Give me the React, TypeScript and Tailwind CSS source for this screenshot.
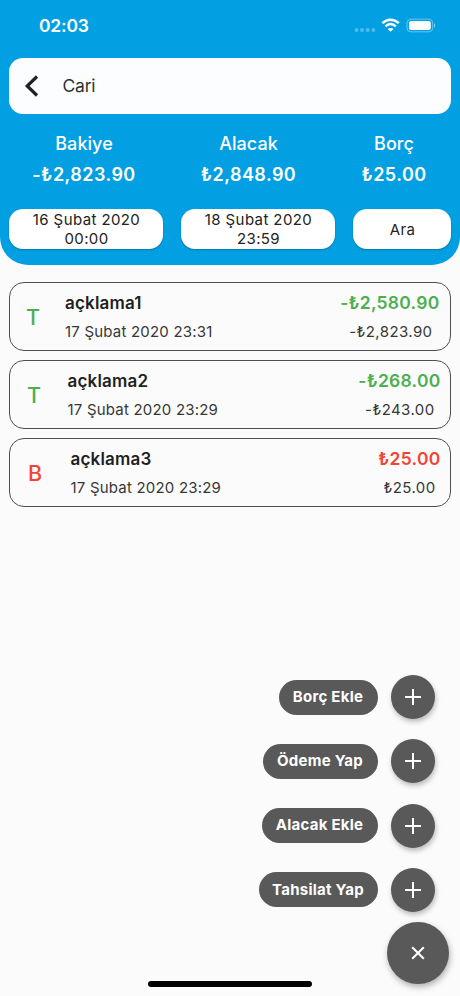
type Entry = {
  kind: string;
  title: string;
  date: string;
  amount: string;
  balance: string;
  color: string;
  kindBox: string;
  amountPad: string;
  balancePad: string;
};

const entries: Entry[] = [
  { kind: "T", title: "açklama1", date: "17 Şubat 2020 23:31", amount: "-₺2,580.90", balance: "-₺2,823.90", color: "text-[#4caf50]", kindBox: "w-[55px] pl-[16px]", amountPad: "pr-[10.5px]", balancePad: "pr-[17.5px]" },
  { kind: "T", title: "açklama2", date: "17 Şubat 2020 23:29", amount: "-₺268.00", balance: "-₺243.00", color: "text-[#4caf50]", kindBox: "w-[57.5px] pl-[17px]", amountPad: "pr-[9.5px]", balancePad: "pr-[15.5px]" },
  { kind: "B", title: "açklama3", date: "17 Şubat 2020 23:29", amount: "₺25.00", balance: "₺25.00", color: "text-[#f44336]", kindBox: "w-[60.5px] pl-[18px]", amountPad: "pr-[9.5px]", balancePad: "pr-[14.5px]" },
];

const actions = [
  { label: "Borç Ekle", width: "w-[99px]" },
  { label: "Ödeme Yap", width: "w-[115px]" },
  { label: "Alacak Ekle", width: "w-[116px]" },
  { label: "Tahsilat Yap", width: "w-[119px]" },
];

function StatusBar() {
  return (
    <div className="flex h-[58px] items-start pl-[39px] pr-[24px] pt-[14px]">
      <span className="text-[17.5px] font-semibold leading-[24px] tracking-[-0.2px]">02:03</span>
      <svg className="ml-auto mt-[3px]" width="82" height="16" viewBox="0 0 82 16" fill="none">
        <g fill="#fff" fillOpacity="0.3">
          <circle cx="2.5" cy="13" r="2" />
          <circle cx="8" cy="13" r="2" />
          <circle cx="13.7" cy="13" r="2" />
          <circle cx="19.4" cy="13" r="2" />
        </g>
        <g stroke="#fff" strokeWidth="2.5">
          <path d="M28.4 6.2C33.3 1.5 39.9 1.5 44.8 6.2" />
          <path d="M31.4 9.3C34.6 6.3 38.6 6.3 41.8 9.3" />
        </g>
        <path d="M36.6 14.8L33.7 12C35.3 10.5 37.9 10.5 39.5 12Z" fill="#fff" />
        <rect x="53" y="2.2" width="25.7" height="12.6" rx="3.8" stroke="#fff" strokeOpacity="0.4" />
        <rect x="55" y="4.1" width="21.8" height="8.9" rx="2" fill="#fff" />
        <path d="M80 6.3C81.6 6.8 81.6 10.2 80 10.7Z" fill="#fff" fillOpacity="0.5" />
      </svg>
    </div>
  );
}

function Total({ label, value, width }: { label: string; value: string; width: string }) {
  return (
    <div className={`flex shrink-0 flex-col items-center whitespace-nowrap ${width}`}>
      <span className="text-[18px] font-medium leading-[24px] tracking-[0.05px]">{label}</span>
      <span className="mt-[7px] text-[18px] font-semibold leading-[24px] tracking-[0.45px]">{value}</span>
    </div>
  );
}

function Pill({ lines, width }: { lines: string[]; width: string }) {
  return (
    <button className={`flex h-[40px] flex-col items-center justify-center rounded-[14px] bg-white pl-[1px] text-[15px] leading-[19px] tracking-[0.4px] text-[#222] shadow-[0_1px_2px_rgba(0,0,0,0.25)] ${width}`}>
      {lines.map((line) => (
        <span key={line} className="whitespace-nowrap">{line}</span>
      ))}
    </button>
  );
}

function EntryCard({ entry }: { entry: Entry }) {
  return (
    <li className="flex h-[69px] rounded-[15px] border border-[#4f4f4f]">
      <div className={`flex shrink-0 items-center pt-[2px] text-[21.5px] font-medium leading-none ${entry.kindBox} ${entry.color}`}>{entry.kind}</div>
      <div className="flex flex-col whitespace-nowrap pt-[8px]">
        <span className="text-[17px] font-semibold leading-[24px] tracking-[0.2px] text-[#1f1f1f]">{entry.title}</span>
        <span className="mt-[6px] text-[15px] leading-[22px] tracking-[0.2px] text-[#373737]">{entry.date}</span>
      </div>
      <div className="ml-auto flex flex-col items-end whitespace-nowrap pt-[8px]">
        <span className={`text-[17.5px] font-semibold leading-[24px] tracking-[0.25px] ${entry.color} ${entry.amountPad}`}>{entry.amount}</span>
        <span className={`mt-[6px] text-[15px] leading-[22px] tracking-[0.4px] text-[#373737] ${entry.balancePad}`}>{entry.balance}</span>
      </div>
    </li>
  );
}

export default function App() {
  return (
    <div className="relative flex h-[996px] w-[460px] flex-col overflow-hidden bg-[#fbfbfb] font-['Inter','Noto_Sans',sans-serif]">
      <header className="h-[264.5px] rounded-b-[28px] bg-[#02a0e3] text-white">
        <StatusBar />
        <div className="mx-[9px] flex h-[55.5px] items-center rounded-[14px] bg-[#fcfdff] pl-[15px]">
          <svg width="16" height="24" viewBox="0 0 16 24" fill="none" stroke="#222" strokeWidth="3.2">
            <path d="M13 2.5L3.2 12L13 21.5" />
          </svg>
          <span className="ml-[22.5px] text-[17.5px] leading-[24px] tracking-[-0.2px] text-[#303030]">Cari</span>
        </div>
        <div className="flex pl-[4px] pt-[18px]">
          <Total label="Bakiye" value="-₺2,823.90" width="w-[160px]" />
          <Total label="Alacak" value="₺2,848.90" width="w-[169px]" />
          <Total label="Borç" value="₺25.00" width="ml-[9px] w-[104px]" />
        </div>
        <div className="mx-[9px] mt-[22.5px] flex gap-[18px]">
          <Pill lines={["16 Şubat 2020", "00:00"]} width="w-[154px]" />
          <Pill lines={["18 Şubat 2020", "23:59"]} width="w-[154px]" />
          <Pill lines={["Ara"]} width="w-[98px]" />
        </div>
      </header>

      <ul className="mx-[9px] mt-[17.5px] flex flex-col gap-[9px]">
        {entries.map((entry) => (
          <EntryCard key={entry.title} entry={entry} />
        ))}
      </ul>

      <div className="absolute right-0 top-[675px] flex w-[240px] flex-col items-end">
        <div className="flex flex-col items-end gap-[20.3px] pr-[25px]">
          {actions.map((action) => (
            <div key={action.label} className="flex items-center gap-[13.5px]">
              <span className={`flex h-[35px] items-center justify-center whitespace-nowrap rounded-full bg-[#595959] text-[15px] font-bold tracking-[0.25px] text-white ${action.width}`}>
                {action.label}
              </span>
              <button className="flex size-[44px] items-center justify-center rounded-full bg-[#595959] shadow-[1px_3px_5px_rgba(0,0,0,0.25)]">
                <svg width="16" height="16" viewBox="0 0 16 16" stroke="#fff" strokeWidth="2">
                  <path d="M0 8H16M8 0V16" />
                </svg>
              </button>
            </div>
          ))}
        </div>
        <button className="mr-[11.5px] mt-[10px] flex size-[62px] items-center justify-center rounded-full bg-[#595959] shadow-[1px_3px_6px_rgba(0,0,0,0.3)]">
          <svg width="14" height="14" viewBox="0 0 14 14" stroke="#fff" strokeWidth="2.1">
            <path d="M1.2 1.2L12.8 12.8M12.8 1.2L1.2 12.8" />
          </svg>
        </button>
      </div>

      <div className="absolute bottom-[9px] left-[148px] h-[6px] w-[164px] rounded-full bg-black" />
    </div>
  );
}
